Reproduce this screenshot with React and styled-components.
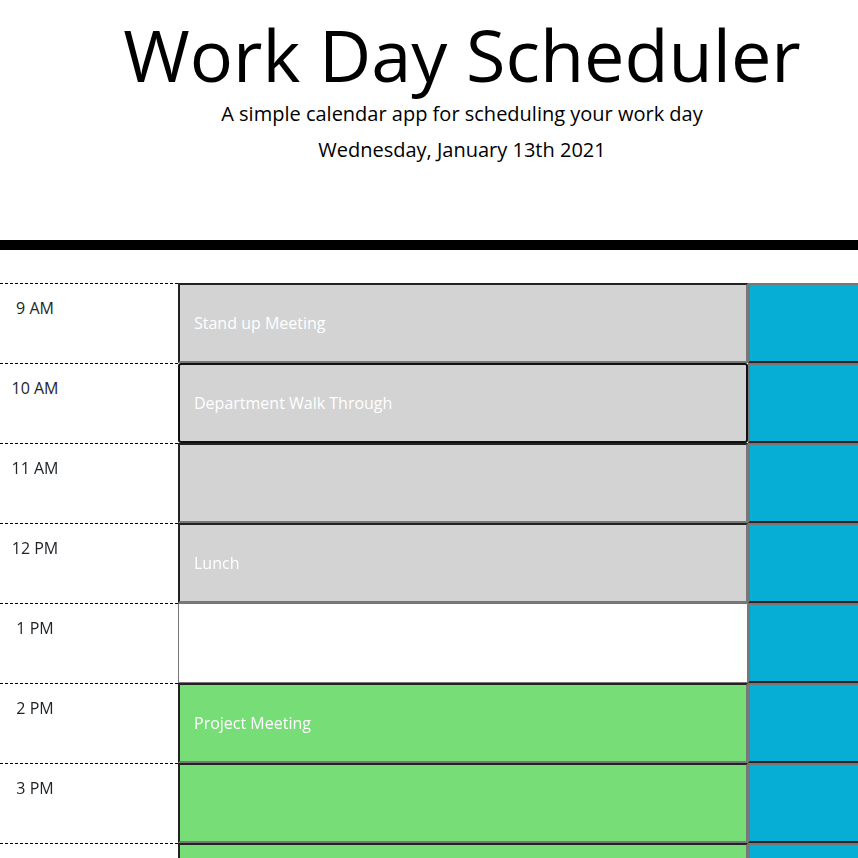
import { useState } from 'react';
import styled, { createGlobalStyle } from 'styled-components';

const GlobalStyle = createGlobalStyle`
    html, body {
        margin: 0;
        padding: 0;
        overflow: hidden;
        background: #fff;
    }

    body {
        font-family: "Open Sans", "Liberation Sans", sans-serif;
        color: #212529;
    }
`

const Page = styled.div`
    width: 924px;
`

const Jumbotron = styled.header`
    text-align: center;
    padding: 11px 0 75px;
    border-bottom: 10px solid #000;
    margin-bottom: 33px;

    h1 {
        margin: 0;
        font-size: 72px;
        font-weight: 400;
        line-height: 86px;
        color: #000;
    }
`

const Lead = styled.p`
    margin: 0;
    font-size: 20px;
    font-weight: 400;
    line-height: 30px;
    margin-top: ${props => props.$top || 0}px;
    color: #000;
`

const Row = styled.div`
    display: flex;
    height: 80px;
`

const Hour = styled.div`
    width: 178px;
    box-sizing: border-box;
    border-top: 1px dashed #000;
    padding-top: 12px;

    span {
        display: block;
        width: 70px;
        text-align: center;
        font-size: 16px;
        line-height: 24px;
    }
`

const colors = {
    past: '#d3d3d3',
    present: '#fff',
    future: '#77dd77',
}

const Task = styled.textarea`
    flex: none;
    width: 570px;
    height: 80px;
    box-sizing: border-box;
    margin: 0;
    resize: none;
    outline: none;
    font-family: "Open Sans", "Liberation Sans", sans-serif;
    font-size: 16px;
    line-height: 24px;
    color: #fff;
    padding: 26px 14px 0;
    background: ${props => colors[props.$time]};
    border-style: solid;
    border-width: ${props => props.$time === 'present' ? '1px' : '2px'};
    border-color: ${props => props.$time === 'present'
        ? '#767676'
        : '#222 #777 #777 #222'};
    ${props => props.$time === 'present' && 'padding: 27px 15px 0;'}
    ${props => props.$focused && `
        border-color: #101010;
        border-radius: 3px;
    `}
`

const SaveBtn = styled.button`
    flex: none;
    width: 176px;
    height: 80px;
    box-sizing: border-box;
    margin: 0;
    background: #06aed5;
    border-style: solid;
    border-width: 2px;
    border-color: #777 #222 #222 #777;
    cursor: pointer;
`

const schedule = [
    { hour: '9 AM', time: 'past', text: 'Stand up Meeting' },
    { hour: '10 AM', time: 'past', text: 'Department Walk Through', focused: true },
    { hour: '11 AM', time: 'past', text: '' },
    { hour: '12 PM', time: 'past', text: 'Lunch' },
    { hour: '1 PM', time: 'present', text: '' },
    { hour: '2 PM', time: 'future', text: 'Project Meeting' },
    { hour: '3 PM', time: 'future', text: '' },
    { hour: '4 PM', time: 'future', text: '' },
]

const TimeBlock = ({ hour, time, text, focused }) => {
    const [value, setValue] = useState(text);

    const moveCaret = (e) => {
        const len = e.target.value.length;
        e.target.setSelectionRange(len, len);
    }

    return (
        <Row>
            <Hour><span>{hour}</span></Hour>
            <Task
                $time={time}
                $focused={focused}
                value={value}
                autoFocus={focused}
                onFocus={focused ? moveCaret : undefined}
                onChange={e => setValue(e.target.value)}/>
            <SaveBtn aria-label="save"/>
        </Row>
    )
}

const App = () => {
    return (
        <Page>
            <GlobalStyle/>
            <Jumbotron>
                <h1>Work Day Scheduler</h1>
                <Lead $top={2}>A simple calendar app for scheduling your work day</Lead>
                <Lead $top={6}>Wednesday, January 13th 2021</Lead>
            </Jumbotron>
            {schedule.map(block => (
                <TimeBlock key={block.hour} {...block}/>
            ))}
        </Page>
    )
}

export default App
